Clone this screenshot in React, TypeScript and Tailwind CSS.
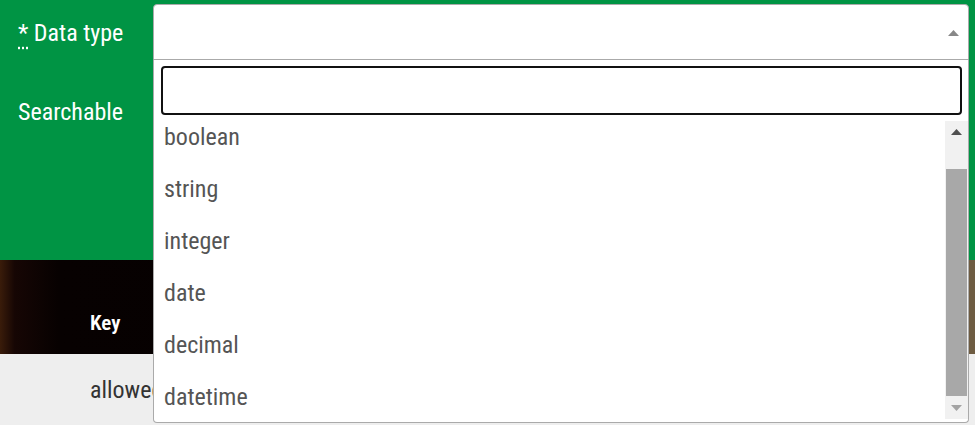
const OPTIONS = ["boolean", "string", "integer", "date", "decimal", "datetime"];

function Triangle({ up, className }: { up?: boolean; className: string }) {
  return (
    <svg width="11" height="6" viewBox="0 0 11 6" className={className}>
      <path d={up ? "M0 6 L5.5 0 L11 6 Z" : "M0 0 L11 0 L5.5 6 Z"} fill="currentColor" />
    </svg>
  );
}

function Scrollbar() {
  return (
    <div className="flex w-[23px] shrink-0 flex-col bg-[#f1f1f1]">
      <div className="flex h-[21px] items-center justify-center">
        <Triangle up className="text-[#505050]" />
      </div>
      <div className="mt-[27px] mx-[1px] h-[227px] bg-[#a8a8a8]" />
      <div className="flex flex-1 items-center justify-center">
        <Triangle className="text-[#a3a3a3]" />
      </div>
    </div>
  );
}

function Dropdown() {
  return (
    <div className="absolute left-0 right-0 top-full z-10 rounded-b-[4px] border border-t-0 border-[#aaaaaa] bg-white pb-[3px]">
      <div className="pl-[7px] pr-[6px] pt-[6px] pb-[6px]">
        <input className="block h-[49px] w-full rounded-[4px] border-2 border-[#111111] bg-white outline-none" />
      </div>
      <div className="flex h-[298px]">
        <ul className="flex-1 overflow-hidden">
          <div className="-mt-[10px]">
            {OPTIONS.map((o) => (
              <li key={o} className="flex h-[52px] items-center pl-[10px] text-[24px] text-[#555555]">
                {o}
              </li>
            ))}
          </div>
        </ul>
        <Scrollbar />
      </div>
    </div>
  );
}

export default function App() {
  return (
    <div className="h-[425px] w-[975px] overflow-hidden bg-[#eeeeee] font-['Roboto',sans-serif] [font-stretch:condensed]">
      <section className="h-[260px] bg-[#009444] pt-[4px] pr-[6px]">
        <div className="flex items-center">
          <label className="w-[153px] shrink-0 pl-[18px] pt-[2px] text-[24px] text-white">
            <abbr title="required" className="no-underline">
              <span className="underline decoration-dotted underline-offset-[6px]">*</span>
            </abbr>{" "}
            Data type
          </label>
          <div className="relative flex-1">
            <div className="flex h-[56px] items-center justify-end rounded-t-[4px] border border-[#aaaaaa] bg-white pr-[9px] pt-[2px]">
              <Triangle up className="text-[#888888]" />
            </div>
            <Dropdown />
          </div>
        </div>
        <div className="mt-[34px] pl-[18px] text-[24px] text-white">Searchable</div>
      </section>
      <div className="flex h-[94px] items-end bg-[linear-gradient(to_right,#3a1c0a_0%,#160604_1.5%,#070101_6%,#040000_60%,#040000_99.2%,#6e5c42_99.4%)] pb-[15px] pl-[90px]">
        <span className="text-[21px] font-semibold text-white">Key</span>
      </div>
      <div className="flex h-[71px] items-center pl-[90px] text-[24px] text-[#333333]">allowedValues</div>
    </div>
  );
}
